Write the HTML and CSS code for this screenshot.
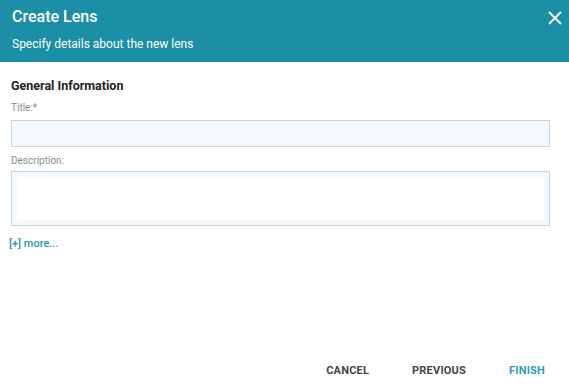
FILE: index.html
```html
<!doctype html>
<html lang="en">
<head>
  <meta charset="UTF-8">
  <title>Create Lens</title>
  <link rel="stylesheet" href="styles.css">
</head>
<body>
  <div class="dialog">
    <div class="header">
      <div class="header-top">
        <h1>Create Lens</h1>
        <svg class="close" width="14" height="14" viewBox="0 0 14 14">
          <path d="M1 1L13 13M13 1L1 13" stroke="#fff" stroke-width="1.8" fill="none"/>
        </svg>
      </div>
      <p>Specify details about the new lens</p>
    </div>
    <div class="body">
      <h2>General Information</h2>
      <label>Title:*</label>
      <div class="input"></div>
      <label>Description:</label>
      <div class="textarea"><div class="textarea-inner"></div></div>
      <a class="more">[+] more...</a>
    </div>
    <div class="footer">
      <button>Cancel</button>
      <button>Previous</button>
      <button class="primary">Finish</button>
    </div>
  </div>
</body>
</html>
```

FILE: styles.css
```css
* {
  margin: 0;
  padding: 0;
  box-sizing: border-box;
  font-family: Roboto, sans-serif;
}
body {
  background: #fff;
  width: 569px;
  height: 385px;
}
.dialog {
  display: flex;
  flex-direction: column;
  height: 385px;
}
.header {
  background: #1a8fa5;
  color: #fff;
  height: 62px;
  padding: 7px 7px 0 12px;
}
.header-top {
  display: flex;
  justify-content: space-between;
  align-items: center;
}
.header h1 {
  font-size: 16px;
  font-weight: 500;
  line-height: 20px;
}
.close {
  margin-top: 2px;
}
.header p {
  font-size: 12px;
  margin-top: 10px;
  line-height: 14px;
}
.body {
  padding: 16px 19px 0 11px;
  flex: 1;
  display: flex;
  flex-direction: column;
}
.body h2 {
  font-size: 12.5px;
  font-weight: 700;
  color: #222;
  line-height: 16px;
}
label {
  font-size: 10px;
  color: #8a8a8a;
  margin-top: 8px;
  line-height: 12px;
}
.input {
  height: 27px;
  margin-top: 6px;
  background: #f4f9fe;
  border: 1px solid #c4d4e3;
}
.body label + .input + label {
  margin-top: 8px;
}
.textarea {
  height: 55px;
  margin-top: 4px;
  background: #f4f9fe;
  border: 1px solid #c4d4e3;
  padding: 5px;
}
.textarea-inner {
  background: #fff;
  height: 100%;
}
.more {
  color: #2c94ad;
  font-size: 11px;
  font-weight: 500;
  margin-top: 11px;
  margin-left: -2px;
  line-height: 14px;
}
.footer {
  display: flex;
  justify-content: flex-end;
  padding: 0 24px 7px 0;
  gap: 43px;
}
.footer button {
  background: none;
  border: none;
  font-size: 11px;
  font-weight: 700;
  text-transform: uppercase;
  color: #444;
  letter-spacing: 0.2px;
  line-height: 14px;
}
.footer .primary {
  color: #2c9cb8;
}
```
